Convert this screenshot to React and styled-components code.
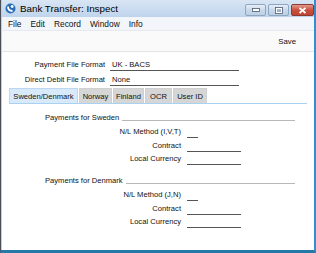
import React from "react";
import styled, { createGlobalStyle } from "styled-components";

const Global = createGlobalStyle`
  html, body { margin: 0; padding: 0; width: 316px; height: 253px; overflow: hidden; background: #fff; }
  * { box-sizing: border-box; }
`;

const Win = styled.div`
  width: 316px;
  height: 253px;
  display: flex;
  flex-direction: column;
  border-left: 1px solid #4a4f57;
  border-right: 2px solid #2f8fd2;
  border-bottom: 3px solid #2479a8;
  font-family: "Liberation Sans", Arial, sans-serif;
  color: #111;
  background: #fff;
`;

const TitleBar = styled.div`
  height: 17px;
  flex: none;
  display: flex;
  align-items: center;
  padding-left: 3px;
  background: linear-gradient(#d8e5f4, #bfd4ec);
  border-left: 1px solid #b6d1ee;
`;

const Title = styled.span`
  font-size: 9.8px;
  margin-left: 4px;
  flex: 1;
  color: #000;
`;

const WinBtns = styled.div`
  display: flex;
  gap: 2px;
  align-self: flex-start;
  margin-top: 4px;
`;

const WinBtn = styled.div`
  width: ${(p) => p.$w}px;
  height: 12px;
  border-radius: 2px;
  border: 1px solid ${(p) => (p.$close ? "#8a3a32" : "#8fa6bf")};
  background: ${(p) =>
    p.$close
      ? "linear-gradient(#e49a8c, #c9503c 50%, #c04531)"
      : "linear-gradient(#e6eef8, #c9d9ea 50%, #bccfe4)"};
  display: flex;
  align-items: center;
  justify-content: center;
`;

const MenuBar = styled.div`
  height: 14px;
  flex: none;
  display: flex;
  align-items: center;
  padding-left: 6px;
  gap: 9px;
  background: #f2f5fa;
  border-left: 1px solid #b6d1ee;
  border-bottom: 1px solid #e6eaf0;
`;

const MenuItem = styled.span`
  font-size: 8.4px;
`;

const Toolbar = styled.div`
  height: 21px;
  flex: none;
  display: flex;
  align-items: center;
  justify-content: flex-end;
  padding-right: 18px;
  background: #fafafa;
  border-left: 1px solid #b6d1ee;
  border-bottom: 1px solid #e4e4e4;
`;

const ToolBtn = styled.span`
  font-size: 7.8px;
`;

const Body = styled.div`
  flex: 1;
  border-left: 1px solid #b6d1ee;
  padding-top: 7px;
  font-size: 7.6px;
`;

const Form = styled.div`
  display: grid;
  grid-template-columns: 103px 129px;
  column-gap: 5px;
  row-gap: 3px;
`;

const Label = styled.div`
  text-align: right;
  height: 12px;
  line-height: 12px;
  white-space: nowrap;
`;

const Field = styled.div`
  width: ${(p) => p.$w || 129}px;
  height: 12px;
  line-height: 12px;
  border-bottom: 1px solid #555;
  padding-left: 2px;
  white-space: nowrap;
`;

const Tabs = styled.div`
  display: flex;
  gap: 1px;
  margin: 2px 7px 0 7px;
  border-bottom: 1px solid #a9d2f2;
`;

const Tab = styled.div`
  width: ${(p) => p.$w}px;
  height: 15px;
  line-height: 15px;
  text-align: center;
  background: ${(p) => (p.$active ? "#d8e9f9" : "#d6d6d6")};
  border: 1px solid ${(p) => (p.$active ? "#bcd8f1" : "#d0d0d0")};
  border-bottom: none;
  font-size: 7.6px;
  white-space: nowrap;
`;

const Section = styled.div`
  margin-top: ${(p) => p.$mt}px;
  padding-left: 43px;
  padding-right: 19px;
`;

const SectionHead = styled.div`
  display: flex;
  align-items: flex-end;
  gap: 3px;
  height: 12px;
  line-height: 12px;
`;

const SectionLine = styled.div`
  flex: 1;
  border-bottom: 1px solid #b8b8b8;
  margin-bottom: 3px;
`;

const SubForm = styled.div`
  display: grid;
  grid-template-columns: 136px auto;
  column-gap: 6px;
  row-gap: 1.5px;
  margin-top: 2px;
  justify-content: start;
`;

const Row = ({ label, value, w }) => (
  <>
    <Label>{label}</Label>
    <Field $w={w}>{value}</Field>
  </>
);

const tabs = [
  ["Sweden/Denmark", 69],
  ["Norway", 33],
  ["Finland", 31],
  ["OCR", 27],
  ["User ID", 34],
];

export default function App() {
  return (
    <>
      <Global />
      <Win>
        <TitleBar>
          <svg width="11" height="11" viewBox="0 0 11 11">
            <circle cx="5.5" cy="5.5" r="5" fill="#2c6fb8" />
            <path d="M3 3.5 Q3 8 7.5 8" stroke="#fff" strokeWidth="1.8" fill="none" />
            <circle cx="7.2" cy="3.5" r="1.4" fill="#fff" />
          </svg>
          <Title>Bank Transfer: Inspect</Title>
          <WinBtns>
            <WinBtn $w={21}>
              <svg width="8" height="4" viewBox="0 0 8 4">
                <rect x="0.5" y="0.5" width="7" height="3" fill="#fff" stroke="#4a5a70" strokeWidth="0.8" />
              </svg>
            </WinBtn>
            <WinBtn $w={21}>
              <svg width="8" height="7" viewBox="0 0 8 7">
                <rect x="0.5" y="0.5" width="7" height="6" fill="#fff" stroke="#4a5a70" strokeWidth="0.8" />
                <rect x="2" y="2.2" width="4" height="2.8" fill="#9fb0c6" />
              </svg>
            </WinBtn>
            <WinBtn $w={23} $close>
              <svg width="9" height="7" viewBox="0 0 9 7">
                <path d="M1.5 1 L7.5 6 M7.5 1 L1.5 6" stroke="#fff" strokeWidth="1.8" />
              </svg>
            </WinBtn>
          </WinBtns>
        </TitleBar>
        <MenuBar>
          <MenuItem>File</MenuItem>
          <MenuItem>Edit</MenuItem>
          <MenuItem>Record</MenuItem>
          <MenuItem>Window</MenuItem>
          <MenuItem>Info</MenuItem>
        </MenuBar>
        <Toolbar>
          <ToolBtn>Save</ToolBtn>
        </Toolbar>
        <Body>
          <Form>
            <Row label="Payment File Format" value="UK - BACS" />
            <Row label="Direct Debit File Format" value="None" />
          </Form>
          <Tabs>
            {tabs.map(([name, w], i) => (
              <Tab key={name} $w={w} $active={i === 0}>
                {name}
              </Tab>
            ))}
          </Tabs>
          <Section $mt={8}>
            <SectionHead>
              <span>Payments for Sweden</span>
              <SectionLine />
            </SectionHead>
            <SubForm>
              <Row label="N/L Method (I,V,T)" w={11} />
              <Row label="Contract" w={54} />
              <Row label="Local Currency" w={54} />
            </SubForm>
          </Section>
          <Section $mt={10}>
            <SectionHead>
              <span>Payments for Denmark</span>
              <SectionLine />
            </SectionHead>
            <SubForm>
              <Row label="N/L Method (J,N)" w={11} />
              <Row label="Contract" w={54} />
              <Row label="Local Currency" w={54} />
            </SubForm>
          </Section>
        </Body>
      </Win>
    </>
  );
}
